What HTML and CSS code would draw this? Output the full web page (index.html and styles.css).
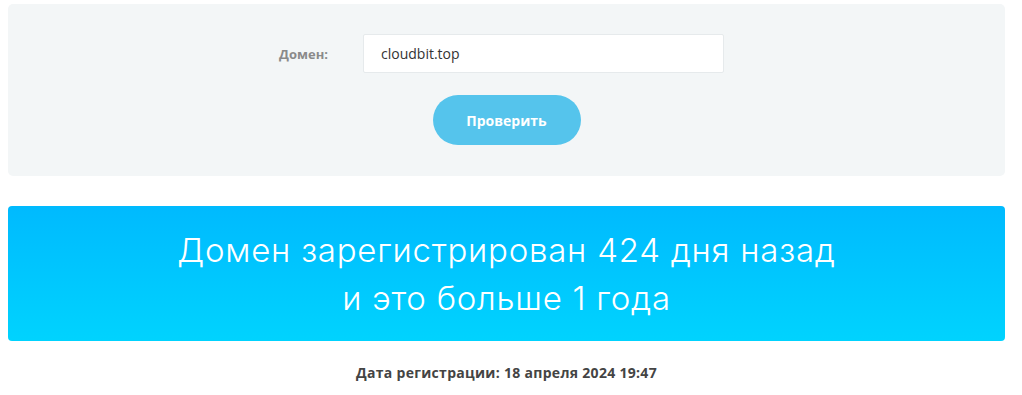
FILE: index.html
```html
<!DOCTYPE html>
<html lang="ru">

<head>
  <meta charset="UTF-8">
  <meta name="viewport" content="width=device-width, initial-scale=1.0">
  <title>Проверка возраста домена</title>
  <link rel="stylesheet" href="styles.css">
</head>

<body>
  <div class="wrapper">
    <!-- форма проверки -->
    <form class="check-form">
      <div class="form-row">
        <label class="form-label" for="domain">Домен:</label>
        <input class="form-input" id="domain" type="text" value="cloudbit.top">
      </div>
      <button class="check-btn" type="button">Проверить</button>
    </form>

    <!-- результат -->
    <div class="result-box">
      <p>Домен зарегистрирован 424 дня назад<br>и это больше 1 года</p>
    </div>

    <p class="reg-date">Дата регистрации: 18 апреля 2024 19:47</p>
  </div>
</body>

</html>
```

FILE: styles.css
```css
* {
  margin: 0;
  padding: 0;
  box-sizing: border-box;
}

body {
  font-family: 'Open Sans', 'Liberation Sans', sans-serif;
  background: #fff;
  color: #444;
}

.wrapper {
  padding: 4px 17px 0 8px;
}

/* форма */
.check-form {
  background: #f3f6f7;
  border-radius: 5px;
  padding: 30px 0 31px;
  display: flex;
  flex-direction: column;
  align-items: center;
}

.form-row {
  display: flex;
  align-items: center;
  padding-right: 10px;
}

.form-label {
  width: 84px;
  font-size: 13px;
  font-weight: 700;
  color: #8a8a8a;
}

.form-input {
  width: 361px;
  height: 39px;
  border: 1px solid #e6eaec;
  border-radius: 2px;
  background: #fff;
  padding: 0 17px;
  font-family: inherit;
  font-size: 14px;
  color: #333;
  outline: none;
}

.check-btn {
  margin-top: 22px;
  width: 148px;
  height: 50px;
  border: none;
  border-radius: 25px;
  background: #55c4ec;
  color: #fff;
  font-family: inherit;
  font-size: 14px;
  font-weight: 700;
  cursor: pointer;
}

/* результат */
.result-box {
  margin-top: 30px;
  height: 135px;
  border-radius: 4px;
  background: linear-gradient(180deg, #00bafe 0%, #00d3fe 100%);
  color: #fff;
  text-align: center;
  padding: 20px 0 19px;
  font-family: 'Inter', 'Open Sans', sans-serif;
  font-size: 33px;
  font-weight: 300;
  line-height: 48px;
  letter-spacing: 0.75px;
}

.reg-date {
  margin-top: 22px;
  text-align: center;
  font-size: 14px;
  font-weight: 700;
  line-height: 20px;
  letter-spacing: 0.3px;
  color: #444;
}
```
